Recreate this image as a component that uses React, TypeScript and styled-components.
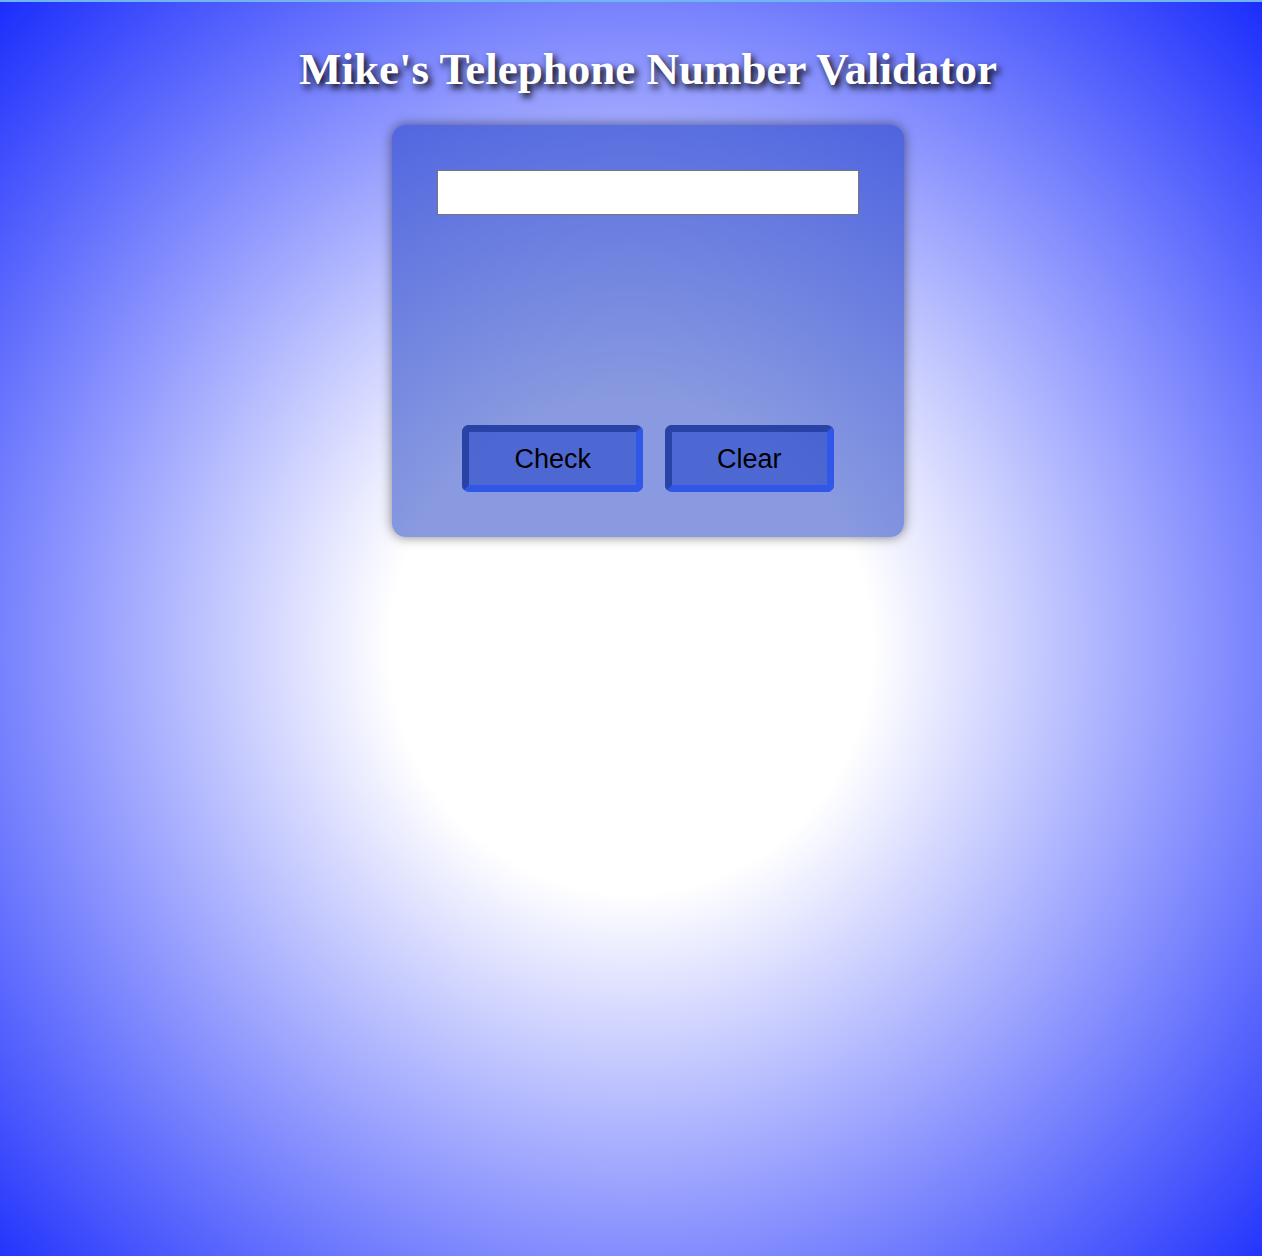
import React, { useRef, useState } from "react";
import styled, { createGlobalStyle } from "styled-components";

const GlobalStyle = createGlobalStyle`
  *, *::before, *::after {
    box-sizing: border-box;
  }

  body {
    margin: 0;
    font-family: "Liberation Serif", "Times New Roman", serif;
  }
`;

const Page = styled.main`
  display: flex;
  flex-direction: column;
  align-items: center;
  gap: 29px;
  min-height: 100vh;
  padding: 40px 0 40px 34px;
  border-top: 2px solid #6fb5f0;
  background: radial-gradient(#ffffff 27%, #1b2dfc 100%) no-repeat;
  background-size: 100% calc(100% + 36px);
`;

const Title = styled.h1`
  margin: 0;
  color: #ffffff;
  font-size: 45px;
  font-weight: bold;
  line-height: 54px;
  text-align: center;
  text-shadow: 3px 4px 7px #000000;
`;

const Panel = styled.form`
  display: flex;
  flex-direction: column;
  align-items: center;
  width: 512px;
  max-width: 100%;
  padding: 45px;
  border-radius: 14px;
  background: rgba(20, 53, 193, 0.5);
  box-shadow: 0 0 12px rgba(0, 0, 0, 0.5);
`;

const NumberInput = styled.input`
  width: 100%;
  height: 45px;
  padding: 4px 8px;
  border: 1px solid #767676;
  border-radius: 0;
  background: #ffffff;
  color: #000000;
  font: 27px "Liberation Sans", Arial, sans-serif;
`;

const Result = styled.output`
  display: block;
  width: 100%;
  height: 210px;
  padding: 24px 0;
  overflow: auto;
  color: #ffffff;
  font-size: 27px;
  text-align: center;
`;

const Actions = styled.div`
  display: flex;
  gap: 22px;
`;

const Button = styled.button`
  height: 67px;
  padding: 0 45px;
  border: 7px solid;
  border-color: #2842a5 #3157e8 #3157e8 #2842a5;
  border-radius: 7px;
  background: rgba(17, 54, 196, 0.5);
  background-clip: padding-box;
  color: #000000;
  font: 27px/32px "Liberation Sans", Arial, sans-serif;
  cursor: pointer;
`;

const phonePattern = /^(1\s?)?(\(\d{3}\)|\d{3})[\s-]?\d{3}[\s-]?\d{4}$/;

export default function App() {
  const [value, setValue] = useState("");
  const [result, setResult] = useState("");
  const field = useRef<HTMLInputElement>(null);

  const check = (event: React.FormEvent) => {
    event.preventDefault();
    if (!value) {
      field.current?.focus();
      return;
    }
    setResult(`${phonePattern.test(value) ? "Valid" : "Invalid"} US number: ${value}`);
  };

  const clear = () => {
    setValue("");
    setResult("");
  };

  return (
    <>
      <GlobalStyle />
      <Page>
        <Title id="title">Mike's Telephone Number Validator</Title>
        <Panel onSubmit={check}>
          <NumberInput
            ref={field}
            type="tel"
            aria-labelledby="title"
            value={value}
            onChange={(event) => setValue(event.target.value)}
          />
          <Result>{result}</Result>
          <Actions>
            <Button type="submit">Check</Button>
            <Button type="button" onClick={clear}>Clear</Button>
          </Actions>
        </Panel>
      </Page>
    </>
  );
}
